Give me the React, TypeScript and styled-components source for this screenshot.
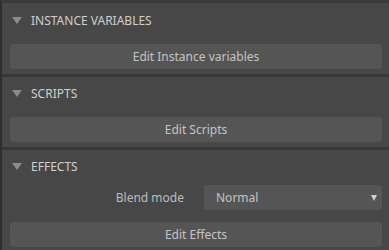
import React from "react";
import styled, { createGlobalStyle } from "styled-components";

const Global = createGlobalStyle`
  html, body { margin: 0; padding: 0; background: #474747; }
  body { font-family: "Noto Sans", "Open Sans", sans-serif; }
`;

const Panel = styled.div`
  width: 389px;
  height: 250px;
  box-sizing: border-box;
  background: #474747;
  border-left: 2px solid #2e2e2e;
  border-top: 3px solid #3a3a3a;
  padding-top: 1px;
  display: flex;
  flex-direction: column;
  overflow: hidden;
`;

const Section = styled.section<{ $last?: boolean }>`
  display: flex;
  flex-direction: column;
  border-bottom: ${(p) => (p.$last ? "none" : "3px solid #383838")};
  padding-bottom: ${(p) => (p.$last ? "0" : "5px")};
`;

const Header = styled.div`
  height: 32px;
  display: flex;
  align-items: center;
  gap: 9px;
  padding-left: 10px;
  color: #cfcfcf;
  font-size: 12px;
`;

const Caret = styled.span`
  width: 0;
  height: 0;
  border-left: 5px solid transparent;
  border-right: 5px solid transparent;
  border-top: 7px solid #8c8c8c;
`;

const Row = styled.div<{ $top: number }>`
  display: flex;
  align-items: center;
  padding: ${(p) => p.$top}px 7px 0 8px;
`;

const Label = styled.div`
  width: 194px;
  box-sizing: border-box;
  padding-right: 20px;
  text-align: right;
  color: #bcbcbc;
  font-size: 12px;
`;

const Button = styled.button`
  flex: 1;
  height: 25px;
  border: none;
  border-radius: 3px;
  background: #555555;
  color: #c4c4c4;
  font-family: inherit;
  font-size: 12px;
  padding: 0;
`;

const Select = styled.div`
  flex: 1;
  height: 25px;
  border-radius: 3px;
  background: #555555;
  color: #c4c4c4;
  font-size: 12px;
  display: flex;
  align-items: center;
  justify-content: space-between;
  padding: 0 5px 0 12px;
`;

const SelectArrow = styled.span`
  width: 0;
  height: 0;
  border-left: 3px solid transparent;
  border-right: 3px solid transparent;
  border-top: 6px solid #cfcfcf;
`;

export default function App() {
  return (
    <>
      <Global />
      <Panel>
        <Section>
          <Header>
            <Caret />
            INSTANCE VARIABLES
          </Header>
          <Row $top={8}>
            <Button>Edit Instance variables</Button>
          </Row>
        </Section>
        <Section>
          <Header>
            <Caret />
            SCRIPTS
          </Header>
          <Row $top={8}>
            <Button>Edit Scripts</Button>
          </Row>
        </Section>
        <Section $last>
          <Header>
            <Caret />
            EFFECTS
          </Header>
          <Row $top={3}>
            <Label>Blend mode</Label>
            <Select>
              Normal
              <SelectArrow />
            </Select>
          </Row>
          <Row $top={12}>
            <Button>Edit Effects</Button>
          </Row>
        </Section>
      </Panel>
    </>
  );
}
